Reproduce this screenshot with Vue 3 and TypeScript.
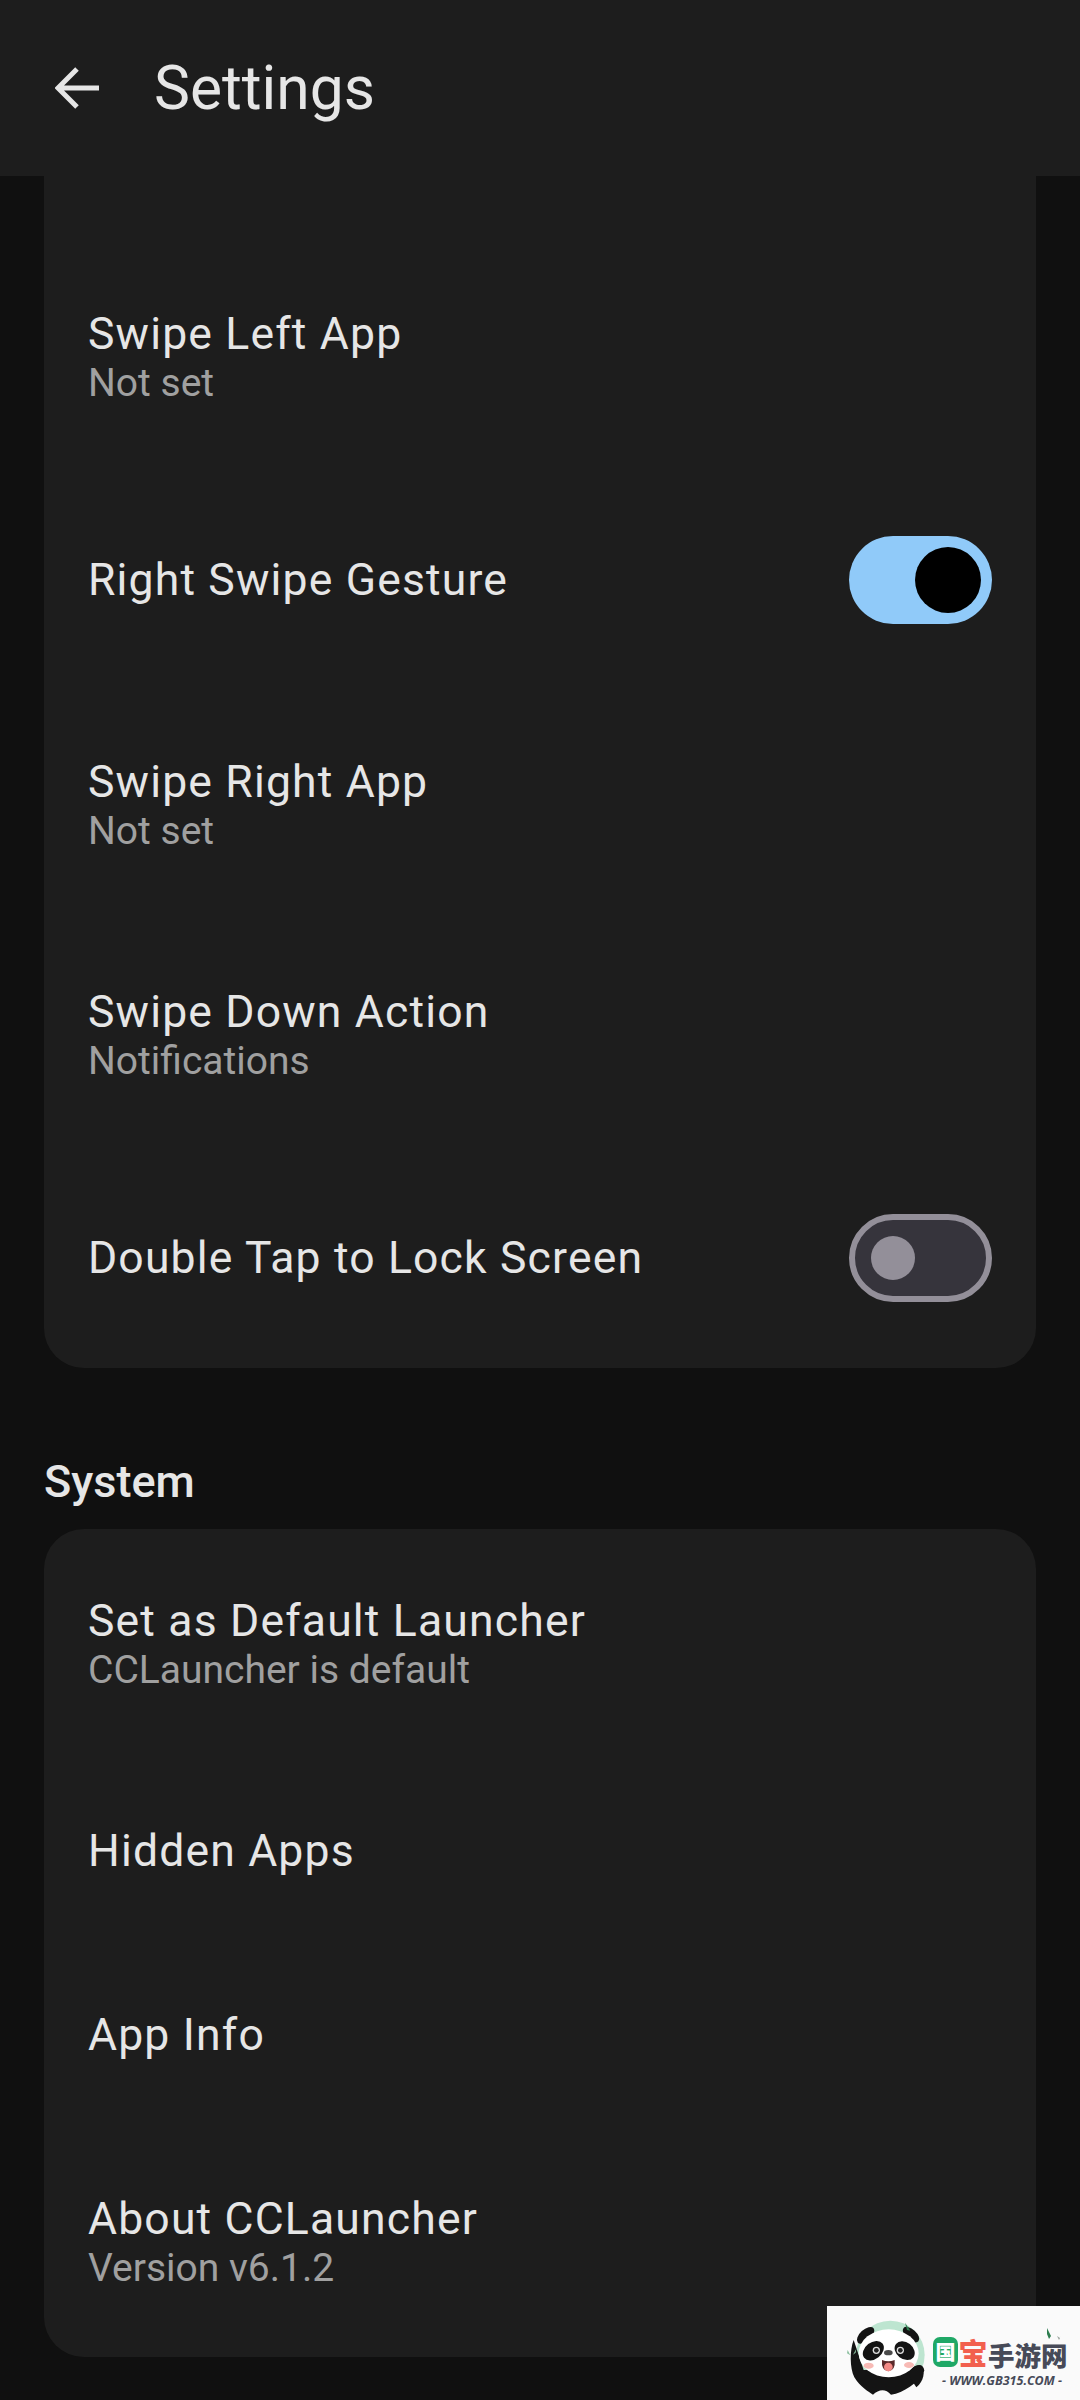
<script setup lang="ts">
interface Row {
  title: string
  sub?: string
  toggle?: 'on' | 'off'
}

const gestures: Row[] = [
  { title: 'Swipe Left App', sub: 'Not set' },
  { title: 'Right Swipe Gesture', toggle: 'on' },
  { title: 'Swipe Right App', sub: 'Not set' },
  { title: 'Swipe Down Action', sub: 'Notifications' },
  { title: 'Double Tap to Lock Screen', toggle: 'off' },
]

const system: Row[] = [
  { title: 'Set as Default Launcher', sub: 'CCLauncher is default' },
  { title: 'Hidden Apps' },
  { title: 'App Info' },
  { title: 'About CCLauncher', sub: 'Version v6.1.2' },
]

const rowClass = (row: Row) => ({
  row: true,
  double: !!row.sub,
  'switch-on': row.toggle === 'on',
  'switch-off': row.toggle === 'off',
})
</script>

<template>
  <div class="page">
    <header class="bar">
      <svg class="back" viewBox="0 0 44 44" width="44" height="44">
        <path d="M44 22H4M22 3 3 22l19 19" fill="none" stroke="#e6e6e6" stroke-width="5" />
      </svg>
      <h1>Settings</h1>
    </header>

    <section class="card first">
      <div v-for="row in gestures" :key="row.title" :class="rowClass(row)">
        <div class="texts">
          <div class="title">{{ row.title }}</div>
          <div v-if="row.sub" class="sub">{{ row.sub }}</div>
        </div>
        <div v-if="row.toggle" :class="['toggle', row.toggle]"><span class="thumb"></span></div>
      </div>
    </section>

    <h2 class="heading">System</h2>

    <section class="card">
      <div v-for="row in system" :key="row.title" :class="rowClass(row)">
        <div class="texts">
          <div class="title">{{ row.title }}</div>
          <div v-if="row.sub" class="sub">{{ row.sub }}</div>
        </div>
      </div>
    </section>

    <div class="mark">
      <svg class="panda" viewBox="0 18 318 282" width="106" height="94">
        <circle cx="190" cy="165" r="103" fill="#bde5d0" />
        <path d="M80 120C68 150 68 205 82 232 100 262 125 275 138 284 155 268 175 264 192 284 230 278 272 250 292 212 290 190 270 190 252 208L110 210Z" fill="#141414" />
        <ellipse cx="116" cy="106" rx="32" ry="17" transform="rotate(-42 116 106)" fill="#141414" />
        <ellipse cx="252" cy="104" rx="30" ry="16" transform="rotate(42 252 104)" fill="#141414" />
        <ellipse cx="185" cy="160" rx="90" ry="72" fill="#fff" />
        <ellipse cx="139" cy="152" rx="35" ry="25" transform="rotate(-38 139 152)" fill="#141414" />
        <ellipse cx="233" cy="152" rx="33" ry="25" transform="rotate(38 233 152)" fill="#141414" />
        <circle cx="148" cy="151" r="11" fill="#ddd" />
        <circle cx="148" cy="151" r="7" fill="#222" />
        <circle cx="220" cy="151" r="11" fill="#ddd" />
        <circle cx="220" cy="151" r="7" fill="#222" />
        <ellipse cx="184" cy="158" rx="13" ry="8" fill="#4a4a4a" />
        <path d="M165 180Q184 188 203 180 206 212 184 214 162 212 165 180Z" fill="#5a2a2a" />
        <ellipse cx="184" cy="201" rx="13" ry="13" fill="#f28a86" />
        <ellipse cx="125" cy="197" rx="15" ry="9" fill="#f7bab5" />
        <ellipse cx="246" cy="195" rx="15" ry="9" fill="#f7bab5" />
        <path d="M247 230C245 205 270 190 284 200 296 212 290 245 268 262Z" fill="#141414" />
        <path d="M234 68 250 92 240 90Z" fill="#2e7d4f" />
        <path d="M62 150 70 166 60 160ZM88 146 78 164 86 158Z" fill="#8bbf9f" />
      </svg>
      <div class="brand">
        <div class="brand-name">
          <span class="g">国</span><span class="r">宝</span><span class="d">手游网</span>
        </div>
        <div class="brand-url">- WWW.GB315.COM -</div>
      </div>
      <svg class="leaf" viewBox="0 0 20 14" width="20" height="14">
        <path d="M1 0 5 8 3 11 1 6Z" fill="#2e7d4f" />
        <path d="M11 8 13 12 16 6 14 10Z" fill="#9aa39c" />
      </svg>
    </div>
  </div>
</template>

<style scoped>
.page {
  position: relative;
  width: 1080px;
  height: 2400px;
  overflow: hidden;
  background: #101010;
  font-family: Roboto, "Noto Sans", sans-serif;
  color: #e6e6e6;
}

.bar {
  display: flex;
  align-items: center;
  height: 176px;
  padding-left: 55px;
  box-sizing: border-box;
  background: #1d1d1d;
}

.back {
  display: block;
  margin-right: 55px;
}

h1 {
  margin: 0;
  font-size: 60.5px;
  font-weight: 400;
}

.card {
  margin: 0 44px;
  background: #1d1d1d;
  border-radius: 40px;
}

.card.first {
  padding-top: 66px;
  padding-bottom: 4px;
  border-radius: 0 0 40px 40px;
}

.row {
  display: flex;
  align-items: center;
  justify-content: space-between;
  height: 184px;
  box-sizing: border-box;
  padding: 0 44px;
}

.row.double {
  height: 230px;
  padding-top: 3px;
}

.row.switch-on {
  height: 218px;
  padding-bottom: 2px;
}

.row.switch-off {
  height: 214px;
  padding-top: 2px;
}

.title {
  font-size: 44.5px;
  line-height: 49px;
  letter-spacing: 1.17px;
}

.sub {
  font-size: 39px;
  line-height: 49px;
  color: #a0a0a0;
}

.heading {
  margin: 0;
  padding: 89px 0 0 44px;
  height: 161px;
  box-sizing: border-box;
  font-size: 45px;
  line-height: 50px;
  font-weight: 500;
}

.toggle {
  display: flex;
  align-items: center;
  width: 143px;
  height: 88px;
  box-sizing: border-box;
  border-radius: 44px;
}

.toggle.on {
  justify-content: flex-end;
  padding-right: 11px;
  background: #90caf9;
}

.toggle.on .thumb {
  width: 66px;
  height: 66px;
  background: #000;
}

.toggle.off {
  padding-left: 16px;
  background: #36343c;
  border: 6px solid #938f99;
}

.toggle.off .thumb {
  width: 44px;
  height: 44px;
  background: #938f99;
}

.thumb {
  display: block;
  border-radius: 50%;
}

.mark {
  position: absolute;
  right: 0;
  bottom: 0;
  display: flex;
  width: 253px;
  height: 94px;
  box-sizing: border-box;
  background: #fafafa;
}

.panda {
  flex: none;
}

.brand {
  padding-top: 29px;
  white-space: nowrap;
}

.brand-name {
  display: flex;
  align-items: flex-end;
  height: 34px;
  font-family: "Noto Sans CJK SC", sans-serif;
  font-weight: 900;
  line-height: 30px;
}

.g {
  width: 25px;
  height: 30px;
  margin-bottom: 2px;
  border-radius: 7px;
  background: #1fa866;
  color: #fff;
  font-size: 20px;
  text-align: center;
}

.r {
  width: 30px;
  color: #f2604e;
  font-size: 29px;
  line-height: 34px;
  text-align: center;
}

.d {
  color: #474a58;
  font-size: 26.5px;
  line-height: 28px;
}

.brand-url {
  margin-top: 4px;
  padding-left: 9px;
  font-family: "Open Sans", sans-serif;
  font-size: 12.5px;
  font-weight: 700;
  line-height: 16px;
  font-style: italic;
  color: #474a58;
}

.leaf {
  position: absolute;
  top: 22px;
  left: 219px;
}
</style>
<style>
html, body { background: #101010; }
</style>
